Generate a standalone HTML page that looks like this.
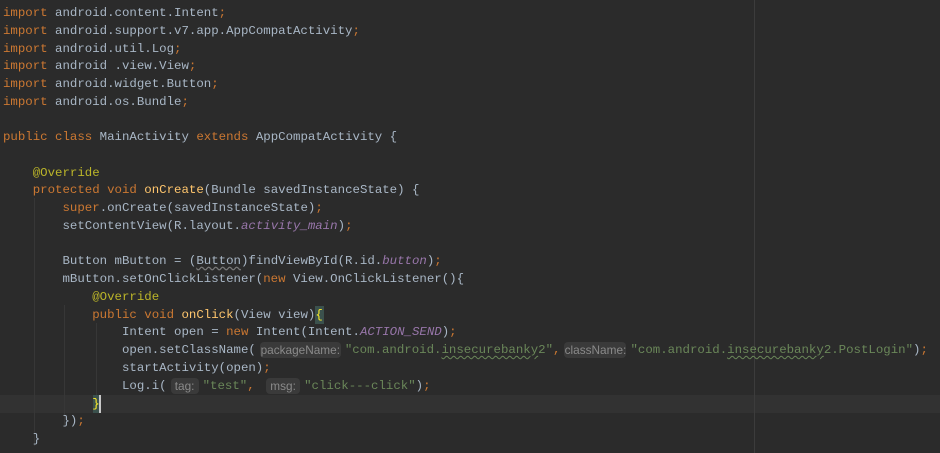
<!DOCTYPE html>
<html><head><meta charset="utf-8"><style>
html,body{margin:0;padding:0;background:#2b2b2b;width:940px;height:453px;overflow:hidden}
.ed{position:relative;width:940px;height:453px;background:#2b2b2b}
.l{position:absolute;left:3px;height:18px;line-height:18px;white-space:pre;font-family:"Liberation Mono",monospace;font-size:12.4px;color:#a9b7c6}
.k{color:#cc7832}.s{color:#6a8759}.a{color:#bbb529}.m{color:#ffc66d}.p{color:#9876aa;font-style:italic}
.h{display:inline-block;font-family:"Liberation Sans",sans-serif;font-size:11.8px;color:#8a8a8a;background:#3a3a3a;border-radius:4px;line-height:16px;height:16px;vertical-align:top;margin:1px 4px 0 4px;text-align:center;overflow:hidden;white-space:nowrap}
.w{text-decoration:underline wavy #6a8759;text-decoration-thickness:1px;text-underline-offset:2px}
.g{position:absolute;width:1px;background:#373737}
</style></head><body><div class="ed">
<div style="position:absolute;left:0;top:395px;width:940px;height:18px;background:#323232"></div>
<div style="position:absolute;left:754px;top:0;width:1px;height:453px;background:#3c3c3c"></div>
<div class="g" style="left:34px;top:198px;height:248px"></div>
<div class="g" style="left:64px;top:305px;height:120px"></div>
<div class="g" style="left:96px;top:323px;height:72px"></div>
<div style="position:absolute;left:93px;top:395px;width:8px;height:18px;background:#3b514d"></div>
<div style="position:absolute;left:99px;top:395px;width:2px;height:18px;background:#c8c8c8"></div>
<div style="position:absolute;left:315px;top:306px;width:9px;height:18px;background:#3b514d"></div>
<div class="l" style="top:4px"><span class="k">import</span> android.content.Intent<span class="k">;</span></div>
<div class="l" style="top:22px"><span class="k">import</span> android.support.v7.app.AppCompatActivity<span class="k">;</span></div>
<div class="l" style="top:40px"><span class="k">import</span> android.util.Log<span class="k">;</span></div>
<div class="l" style="top:57px"><span class="k">import</span> android .view.View<span class="k">;</span></div>
<div class="l" style="top:75px"><span class="k">import</span> android.widget.Button<span class="k">;</span></div>
<div class="l" style="top:93px"><span class="k">import</span> android.os.Bundle<span class="k">;</span></div>
<div class="l" style="top:128px"><span class="k">public class</span> MainActivity <span class="k">extends</span> AppCompatActivity {</div>
<div class="l" style="top:164px">    <span class="a">@Override</span></div>
<div class="l" style="top:181px">    <span class="k">protected void</span> <span class="m">onCreate</span>(Bundle savedInstanceState) {</div>
<div class="l" style="top:199px">        <span class="k">super</span>.onCreate(savedInstanceState)<span class="k">;</span></div>
<div class="l" style="top:217px">        setContentView(R.layout.<span class="p">activity_main</span>)<span class="k">;</span></div>
<div class="l" style="top:252px">        Button mButton = (<span style="text-decoration:underline wavy #777;text-underline-offset:2px">Button</span>)findViewById(R.id.<span class="p">button</span>)<span class="k">;</span></div>
<div class="l" style="top:270px">        mButton.setOnClickListener(<span class="k">new</span> View.OnClickListener(){</div>
<div class="l" style="top:288px">            <span class="a">@Override</span></div>
<div class="l" style="top:306px">            <span class="k">public void</span> <span class="m">onClick</span>(View view)<span style="color:#ffef28">{</span></div>
<div class="l" style="top:323px">                Intent open = <span class="k">new</span> Intent(Intent.<span class="p">ACTION_SEND</span>)<span class="k">;</span></div>
<div class="l" style="top:341px">                open.setClassName(<span class="h" style="width:81px">packageName:</span><span class="s">"com.android.<span class="w">insecurebanky</span>2"</span><span class="k">,</span><span class="h" style="width:62px">className:</span><span class="s">"com.android.<span class="w">insecurebanky</span>2.PostLogin"</span>)<span class="k">;</span></div>
<div class="l" style="top:359px">                startActivity(open)<span class="k">;</span></div>
<div class="l" style="top:377px">                Log.i(<span class="h" style="width:28px">tag:</span><span class="s">"test"</span><span class="k">,</span> <span class="h" style="width:34px">msg:</span><span class="s">"click---click"</span>)<span class="k">;</span></div>
<div class="l" style="top:395px">            <span style="color:#ffef28">}</span></div>
<div class="l" style="top:412px">        })<span class="k">;</span></div>
<div class="l" style="top:430px">    }</div>
</div></body></html>
